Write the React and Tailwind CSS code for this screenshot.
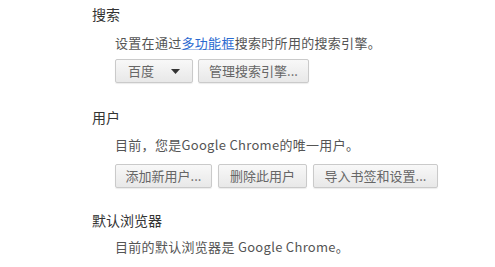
function Btn({ w, children }) {
  return (
    <button className={`h-[24px] ${w} flex items-center justify-center rounded-[2px] border border-[#cacaca] bg-gradient-to-b from-[#f8f8f8] to-[#e8e8e8] text-[13px] text-[#666] shadow-[0_1px_1px_rgba(0,0,0,0.08)]`}>
      {children}
    </button>
  )
}

export default function App() {
  return (
    <div className="w-[495px] h-[267px] bg-white overflow-hidden pl-[92px] pt-[4px] font-['Noto_Sans_CJK_SC','Noto_Sans',sans-serif] text-[#555]">
      {/* 搜索 */}
      <h2 className="h-[20px] leading-[20px] text-[14px] text-[#333]">搜索</h2>
      <div className="pl-[23px] mt-[9px]">
        <p className="h-[20px] leading-[20px] text-[13px] tracking-[0.3px]">
          设置在通过<span className="text-[#2a6ad0] underline decoration-[#a9c1e8]">多功能框</span>搜索时所用的搜索引擎。
        </p>
        <div className="flex gap-[5px] mt-[6px]">
          <button className="h-[24px] w-[78px] flex items-center justify-between px-[12px] rounded-[2px] border border-[#cacaca] bg-gradient-to-b from-[#f8f8f8] to-[#e8e8e8] text-[13px] text-[#666] shadow-[0_1px_1px_rgba(0,0,0,0.08)]">
            <span>百度</span>
            <svg width="9" height="5" viewBox="0 0 9 5"><path d="M0 0h9L4.5 5z" fill="#333" /></svg>
          </button>
          <Btn w="w-[111px]">管理搜索引擎...</Btn>
        </div>
      </div>

      {/* 用户 */}
      <h2 className="h-[20px] leading-[20px] text-[14px] text-[#333] mt-[24px]">用户</h2>
      <div className="pl-[23px] mt-[8px]">
        <p className="h-[20px] leading-[20px] text-[13px] tracking-[0.3px]">目前，您是Google Chrome的唯一用户。</p>
        <div className="flex gap-[6px] mt-[9px]">
          <Btn w="w-[97px]">添加新用户...</Btn>
          <Btn w="w-[89px]">删除此用户</Btn>
          <Btn w="w-[125px]">导入书签和设置...</Btn>
        </div>
      </div>

      {/* 默认浏览器 */}
      <h2 className="h-[20px] leading-[20px] text-[14px] text-[#333] mt-[22px]">默认浏览器</h2>
      <div className="pl-[23px] mt-[7px]">
        <p className="h-[20px] leading-[20px] text-[13px] tracking-[0.3px]">目前的默认浏览器是 Google Chrome。</p>
      </div>
    </div>
  )
}
